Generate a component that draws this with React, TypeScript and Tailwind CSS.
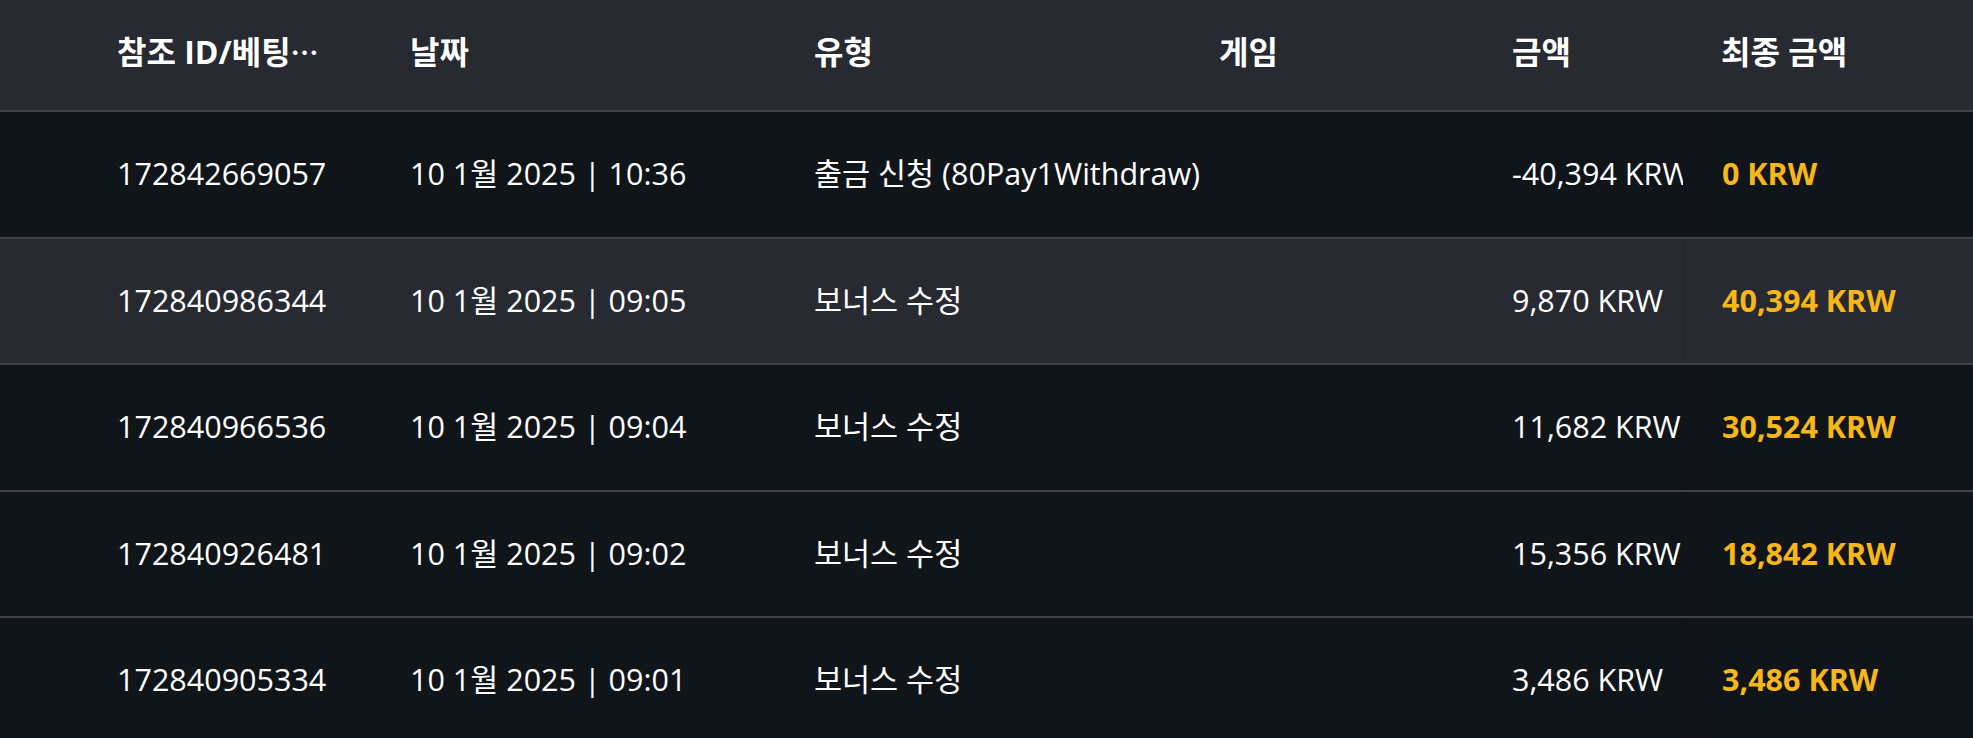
import React from 'react'

type Row = {
    id: string
    date: string
    type: string
    amount: string
    total: string
}

const rows: Row[] = [
    { id: '172842669057', date: '10 1월 2025 | 10:36', type: '출금 신청 (80Pay1Withdraw)', amount: '-40,394 KRW', total: '0 KRW' },
    { id: '172840986344', date: '10 1월 2025 | 09:05', type: '보너스 수정', amount: '9,870 KRW', total: '40,394 KRW' },
    { id: '172840966536', date: '10 1월 2025 | 09:04', type: '보너스 수정', amount: '11,682 KRW', total: '30,524 KRW' },
    { id: '172840926481', date: '10 1월 2025 | 09:02', type: '보너스 수정', amount: '15,356 KRW', total: '18,842 KRW' },
    { id: '172840905334', date: '10 1월 2025 | 09:01', type: '보너스 수정', amount: '3,486 KRW', total: '3,486 KRW' },
]

export default function App() {
    return (
        <div className="w-full h-[738px] overflow-hidden bg-[#10151a] text-white font-['Open_Sans','Noto_Sans_CJK_KR',sans-serif] text-[30.5px] whitespace-nowrap">
            <div className="flex h-[112px] items-center pb-[6px] bg-[#272a31] border-b-2 border-[#3f4347] font-bold text-[32px]">
                <div className="w-[410px] pl-[117px]">
                    참조 ID/베팅<span className="font-['Noto_Sans_CJK_KR',sans-serif] text-[28px]">…</span>
                </div>
                <div className="w-[404px]">날짜</div>
                <div className="w-[405px]">유형</div>
                <div className="w-[293px]">게임</div>
                <div className="w-[171px]">금액</div>
                <div className="flex-1 pl-[38px]">최종 금액</div>
            </div>
            {rows.map((r, i) => (
                <div
                    key={r.id}
                    className={`flex h-[126.5px] items-stretch border-b-2 border-[#3f4347] ${i === 1 ? 'bg-[#272a31]' : 'bg-[#10151a]'}`}
                >
                    <div className="w-[410px] pl-[117px] flex items-center">{r.id}</div>
                    <div className="w-[404px] flex items-center">{r.date}</div>
                    <div className="w-[405px] flex items-center">{r.type}</div>
                    <div className="w-[293px]" />
                    <div className="w-[171px] flex items-center overflow-hidden">{r.amount}</div>
                    <div className="flex-1 pl-[38px] flex items-center border-l border-black/10 font-bold text-[#f8b718]">
                        {r.total}
                    </div>
                </div>
            ))}
        </div>
    )
}
